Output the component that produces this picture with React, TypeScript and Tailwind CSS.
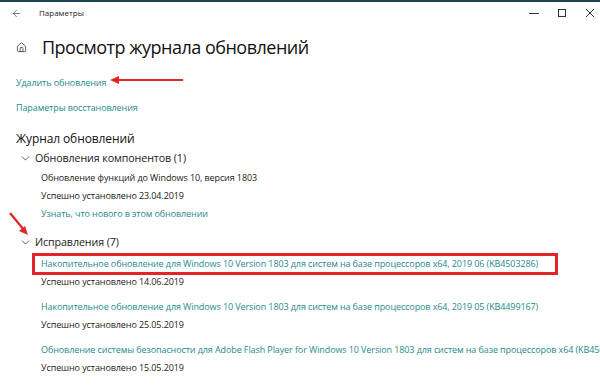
import { ArrowLeft, House, ChevronDown } from 'lucide-react';

const teal = 'text-[#1f8a8c]';

function Entry({ title, date, boxed }: { title: string; date: string; boxed?: boolean }) {
  return (
    <div className="flex flex-col">
      <div
        className={
          boxed
            ? `-ml-[9px] w-[526px] h-[22px] border-[3px] border-[#e0262b] pl-[6px] flex items-center ${teal}`
            : `h-[22px] flex items-center whitespace-nowrap ${teal}`
        }
      >
        <span className="whitespace-nowrap">{title}</span>
      </div>
      <div className="h-[13px] flex items-center text-[#1a1a1a]">{date}</div>
    </div>
  );
}

export default function App() {
  return (
    <div className="relative w-[600px] h-[390px] overflow-hidden bg-white font-['Open_Sans','Noto_Sans',sans-serif] text-[#1a1a1a]">
      <div className="h-[2px] bg-[#1c4150]" />
      {/* Title bar */}
      <div className="h-[22px] flex items-center">
        <ArrowLeft size={11} strokeWidth={1.3} className="ml-[11px] text-[#222]" />
        <span className="ml-[17px] text-[8px] text-[#222]">Параметры</span>
        <div className="ml-auto flex items-center gap-[18px] mr-[5px] text-[#333]">
          <svg width="10" height="10" viewBox="0 0 10 10">
            <path d="M0 5.5h10" stroke="currentColor" strokeWidth="1" />
          </svg>
          <svg width="10" height="10" viewBox="0 0 10 10">
            <rect x="1.5" y="1.5" width="7" height="7" fill="none" stroke="currentColor" strokeWidth="1" />
          </svg>
          <svg width="10" height="10" viewBox="0 0 10 10">
            <path d="M1 1l8 8M9 1l-8 8" stroke="currentColor" strokeWidth="1" />
          </svg>
        </div>
      </div>

      <div className="pl-[16px] text-[9px] tracking-[-0.1px]">
        {/* Page header */}
        <div className="mt-[10px] h-[26px] flex items-center">
          <House size={11} strokeWidth={1.5} className="mr-[15px] text-[#222]" />
          <h1 className="text-[18px] font-normal tracking-[-0.5px] text-[#111]">Просмотр журнала обновлений</h1>
        </div>

        <div className={`mt-[16px] h-[14px] flex items-center ${teal}`}>Удалить обновления</div>
        <div className={`mt-[11px] h-[14px] flex items-center ${teal}`}>Параметры восстановления</div>

        <div className="mt-[15px] h-[18px] flex items-center text-[12px] text-[#111]">Журнал обновлений</div>

        <div className="mt-[1px] h-[18px] flex items-center text-[10.7px]">
          <ChevronDown size={13} strokeWidth={1.3} className="ml-[3px] mr-[3px]" />
          Обновления компонентов (1)
        </div>
        <div className="pl-[25px] flex flex-col">
          <div className="h-[19px] flex items-center mt-[1px]">Обновление функций до Windows 10, версия 1803</div>
          <div className="h-[17px] flex items-center">Успешно установлено 23.04.2019</div>
          <div className={`h-[19px] flex items-center ${teal}`}>Узнать, что нового в этом обновлении</div>
        </div>

        <div className="mt-[10px] h-[18px] flex items-center text-[10.7px]">
          <ChevronDown size={13} strokeWidth={1.3} className="ml-[3px] mr-[3px]" />
          Исправления (7)
        </div>
        <div className="pl-[25px] mt-[2px] flex flex-col gap-[8px]">
          <Entry
            boxed
            title="Накопительное обновление для Windows 10 Version 1803 для систем на базе процессоров x64, 2019 06 (KB4503286)"
            date="Успешно установлено 14.06.2019"
          />
          <Entry
            title="Накопительное обновление для Windows 10 Version 1803 для систем на базе процессоров x64, 2019 05 (KB4499167)"
            date="Успешно установлено 25.05.2019"
          />
          <Entry
            title="Обновление системы безопасности для Adobe Flash Player for Windows 10 Version 1803 для систем на базе процессоров x64 (KB4503308)"
            date="Успешно установлено 15.05.2019"
          />
        </div>
      </div>

      {/* Annotation arrows */}
      <svg className="absolute left-0 top-0 pointer-events-none" width="600" height="390">
        <path d="M183 80H118" stroke="#e0262b" strokeWidth="2.2" />
        <path d="M110 80l9-4v8z" fill="#e0262b" />
        <path d="M10 213L24 230" stroke="#e0262b" strokeWidth="2.2" />
        <path d="M28 235l-9-4 6-5z" fill="#e0262b" />
      </svg>
    </div>
  );
}
